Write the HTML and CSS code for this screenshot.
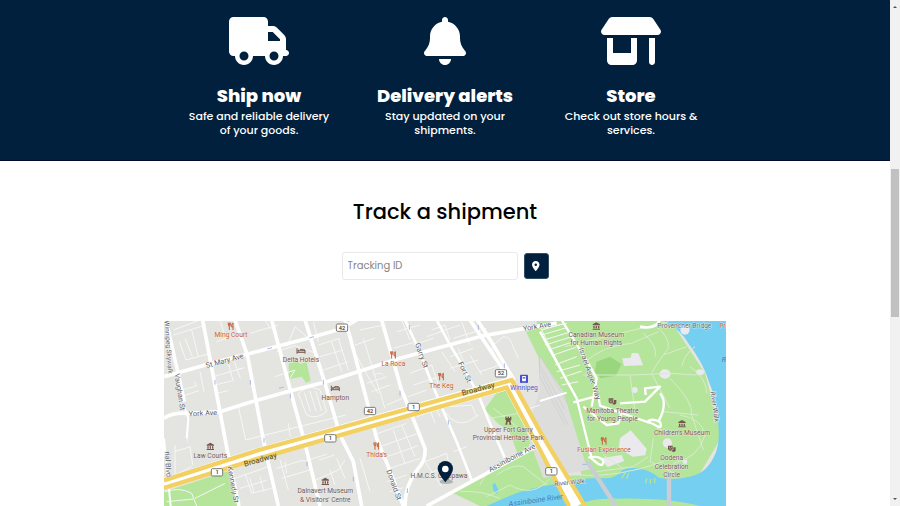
FILE: index.html
```html
<!DOCTYPE html>
<html lang="en">
<head>
<meta charset="utf-8">
<title>Track a shipment</title>
<link rel="stylesheet" href="styles.css">
</head>
<body>
<div class="page">
<main class="content">
  <section class="services">
    <article class="service">
      <svg class="service-icon" viewBox="0 0 640 512" aria-hidden="true"><path d="M48 0C21.5 0 0 21.5 0 48V368c0 26.5 21.5 48 48 48H64c0 53 43 96 96 96s96-43 96-96H384c0 53 43 96 96 96s96-43 96-96h32c17.7 0 32-14.3 32-32s-14.3-32-32-32V288 256 237.3c0-17-6.7-33.3-18.7-45.3L512 114.7c-12-12-28.3-18.7-45.3-18.7H416V48c0-26.5-21.5-48-48-48H48zM416 160h50.7L544 237.3V256H416V160zM112 416a48 48 0 1 1 96 0 48 48 0 1 1 -96 0zm368-48a48 48 0 1 1 0 96 48 48 0 1 1 0-96z"/></svg>
      <h2 class="service-title">Ship now</h2>
      <p class="service-text">Safe and reliable delivery of your goods.</p>
    </article>
    <article class="service">
      <svg class="service-icon" viewBox="0 0 448 512" aria-hidden="true"><path d="M224 0c-17.7 0-32 14.3-32 32V51.2C119 66 64 130.6 64 208v18.8c0 47-17.3 92.4-48.5 127.6l-7.4 8.3c-8.4 9.4-10.4 22.9-5.3 34.4S19.4 416 32 416H416c12.6 0 24-7.4 29.2-18.9s3.1-25-5.3-34.4l-7.4-8.3C401.3 319.2 384 273.9 384 226.8V208c0-77.4-55-142-128-156.8V32c0-17.7-14.3-32-32-32zm45.3 493.3c12-12 18.7-28.3 18.7-45.3H224 160c0 17 6.7 33.3 18.7 45.3s28.3 18.7 45.3 18.7s33.3-6.7 45.3-18.7z"/></svg>
      <h2 class="service-title">Delivery alerts</h2>
      <p class="service-text">Stay updated on your shipments.</p>
    </article>
    <article class="service">
      <svg class="service-icon" viewBox="0 0 640 512" aria-hidden="true"><path d="M36.8 192H603.2c20.3 0 36.8-16.5 36.8-36.8c0-7.3-2.2-14.4-6.2-20.4L558.2 21.4C549.3 8 534.4 0 518.3 0H121.7c-16 0-31 8-39.9 21.4L6.2 134.7c-4 6.1-6.2 13.2-6.2 20.4C0 175.5 16.5 192 36.8 192zM64 224V384v80c0 26.5 21.5 48 48 48H336c26.5 0 48-21.5 48-48V384 224H320V384H128V224H64zm448 0V480c0 17.7 14.3 32 32 32s32-14.3 32-32V224H512z"/></svg>
      <h2 class="service-title">Store</h2>
      <p class="service-text">Check out store hours &amp; services.</p>
    </article>
  </section>

  <section class="track">
    <h1 class="track-title">Track a shipment</h1>
    <form class="track-form">
      <input class="track-input" type="text" placeholder="Tracking ID" aria-label="Tracking ID">
      <button class="track-button" type="button" aria-label="Locate shipment">
        <svg class="track-pin" viewBox="0 0 384 512" aria-hidden="true"><path d="M215.7 499.2C267 435 384 279.4 384 192C384 86 298 0 192 0S0 86 0 192c0 87.4 117 243 168.3 307.2c12.3 15.3 35.1 15.3 47.4 0zM192 128a64 64 0 1 1 0 128 64 64 0 1 1 0-128z"/></svg>
      </button>
    </form>
    <svg class="map" viewBox="12 18 1686 555" preserveAspectRatio="xMidYMin slice" role="img" aria-label="Map of downtown Winnipeg">
      <defs>
        <g id="fork"><path d="M-8-11v7q0 3 3 3v12M-5-11v9M-2-11v7q0 3-3 3M6 11V-10q-4 1-4 7v5h4" fill="none" stroke="currentColor" stroke-width="3"/></g>
        <g id="bed"><path d="M-12-8v16M-12 4h24v4M12 4v-5H-2v-4h10q4 0 4 5" fill="none" stroke="currentColor" stroke-width="3"/><circle cx="-7" cy="-1" r="3" fill="currentColor"/></g>
        <g id="museum"><path d="M-11-5L0-11 11-5v3h-22zM-9 0h4v7h-4zM-2 0h4v7h-4zM5 0h4v7H5zM-11 8h22v3h-22z" fill="currentColor"/></g>
        <g id="masks"><path d="M-11-9H3V2q-7 9-14 0zM5-4h7V6q-5 8-12 1l5-5z" fill="currentColor"/><path d="M-8-4h3M-2-4h3M-7 2q3-3 6 0" fill="none" stroke="#b5e59b" stroke-width="2"/></g>
        <g id="castle"><path d="M-9-12h4v4h3v-4h4v4h3v-4h4v9l-3 3 3 12H3V6q-3-5-6 0v6h-6l3-12-3-3z" fill="currentColor"/></g>
        <g id="shield"><rect x="-17" y="-11" width="34" height="22" rx="4"/></g>
      </defs>
      <rect x="12" y="18" width="1686" height="555" fill="#e4e4e1"/>

      <g fill="#b5e59b">
        <path d="M12 530L205 468l30 105H12z"/>
        <path d="M386 146l28-8 6 8 20-4 12 56-14 5-13-18-38 8z"/>
        <path d="M974 283l42-58 28-4 72 154-12 22-32 18-25-70-32-18z"/>
        <path d="M870 530L1132 390l35 80 40 103H960z"/>
        <path d="M1098 50l42-14v100z"/>
        <path d="M1130 15h400l105 160 50 190-80 135-120 20-200-10-165 10-20-30 165-10-15-60-30-85-80-125z"/>
      </g>
      <path d="M1310 140l40-15 35 22-18 35-45 8-18-20z" fill="#9ad67e"/>

      <path d="M1505 15q60 30 80 70 45 60 62 115 22 50 28 130 5 50-8 85-25 58-70 68-50 15-100 5-25-23-60-27-30-5-50 5-20 25-50 24-55-3-100 8l-97 17q-55 10-115 38l-45 20h740V15z" fill="#74cff0"/>
      <path d="M1250 573q40-25 130-22 150-2 240 22z" fill="#b5e59b"/>
      <path d="M1385 490l12-18M1400 492l6-18M1460 490l-3 15M1472 492l-2 14M1484 490v14" stroke="#b5e59b" stroke-width="4"/>
      <path d="M997 508l8-4 12 24-8 9-8-9z" fill="#74cff0"/>

      <path d="M1140 126l70 105 65 210 25 20-150 28-50-135 40-130z" fill="#dddedb"/>
      <g fill="none" stroke="#cbcbd0" stroke-width="2"><path d="M1140 150l75 135M1140 165l85 165M1140 185l75 145M1140 120l85 150"/></g>
      <g fill="#e9e9ee">
        <path d="M1387 130l25-2 3-14 20 1 6 14 8 22-57 2z"/>
        <ellipse cx="1515" cy="177" rx="17" ry="14"/><ellipse cx="1620" cy="172" rx="12" ry="9"/><circle cx="1424" cy="225" r="9"/><circle cx="1575" cy="45" r="14"/><circle cx="1575" cy="440" r="7"/><circle cx="1522" cy="384" r="14"/>
        <path d="M1380 370l32-24 48 55-4 20-38 4-42-25zM1320 430l65-10 8 18-50 18z"/>
      </g>

      <g fill="none" stroke="#f7f7f5" stroke-width="3" stroke-linejoin="round">
        <path d="M40 60L138 30M40 45l80-30M58 80l20 55 75-20M75 70l22 55M95 45l20 80M170 80l70-25M180 15l18 60M160 185l85-25M205 145l15 55M223 140l18 50M228 165l26-7M165 210l50-12M170 235l35-8M270 55l85-25M315 15l18 28M350 110l55-18 55 20M380 95l25-60 35 30M460 20l15 60M475 90l65-20M480 125l70-20M490 165l75-25M515 80l30 90M535 70l30 95"/>
        <path d="M65 225l45-12-8-15M62 245l55-18M120 170l12 60M235 275l22 100 300-75M85 315l-3 65M45 390v90l50-25M42 410l50-15M90 395l8 55M345 185l60-20-15 25M415 235l25 65q30 15 60-10l-20-65q-30-15-50 0zM433 233l18 55M450 228l18 60M467 228l18 60M500 235l22 60M385 325l6 40"/>
        <path d="M225 490l100-35M240 520l80-24M255 475l20 60 60-15M270 490l12 45M300 485l12 45M350 460l80-25M360 435l25 90M365 490l85-25M375 440l5 35M430 440l70-22M455 500l80-35 20-30M478 435l45-15M510 465l15 45M530 430l25 60"/>
        <path d="M585 90l60-20M600 45l70-15M610 70l65 210M585 115l45 80 25 40M620 205l60-20M635 230l55-20M640 180q20-10 30 0M680 270l60-25M700 100l70-20M710 50l70-20M725 15l25 60M760 90l60-20M770 120l60-22M750 175l65-25 20 60M760 210l70-22M745 245l55-20M800 65l100-35M815 45l40-15 15 45M845 110l40 60M870 125l70-25M870 160l85-25M880 70l100-30M905 20l25 70M930 120l35 60M960 170l55-18M1010 140l-15-45 35-30q20 0 25 20l20 45M895 100l20 50"/>
        <path d="M640 360l100-35M660 395l115-40M665 430l110-38M690 460l90-30M700 345l35 100M725 330l40 95M680 500l60-20M690 530l40-12M600 430l30 100M760 280l60-20 20 45M770 305l75-25M800 255l25 70M855 290q30 45 70 30l30-20M870 275l65-5 15 35M795 440l65-25 10 50M795 440l50 75M810 475l45-20M880 410l40-15M1095 285l45-15"/>
        <path d="M15 530q45-15 80 5l15 38M105 550l90-45M20 560l80-8M1145 45l70-20M1145 60l75-22M1150 75l75-22M1155 90l78-24M1165 105l75-25M1175 122l72-25M1185 150l65-25M1190 170l70-20M1200 190l65-22M1205 210l50-10M1140 35l85 170M1220 25l-70 15"/>
      </g>
      <g fill="none" stroke="#d8eccd" stroke-width="3">
        <path d="M1215 95l310-75M1270 145q60-55 145-60l80-35M1270 180h100l50 0 110-5 80 5M1480 25q50 40 45 75-35 45-50 75l55 105M1510 120l70-25M1450 55q45 40 35 70M1565 155q10-40 40-60M1590 155q50 35 50 80M1530 190q70 70 65 110l35 105M1410 180l15 110M1560 300q65 10 75 60-20 70-95 85M1480 370l-10 70 75 35M1510 290l105 10M1310 470l110-15 45-30M1330 420l60 40M1250 480q120 10 260-40M1490 340l55 15M990 310l85-15M1000 280l90 70M1010 480q50-35 80-25l70 55M900 530q60-5 120 20M960 510q20-50 60-50M1050 510q70 40 120-20M980 545l70-35"/>
      </g>
      <g fill="none" stroke="#cccdd4" stroke-width="13"><path d="M1282 440l85 133M1527 490v83"/></g>

      <g fill="none" stroke="#fff" stroke-width="11" stroke-linejoin="round">
        <path d="M18 15l35 155 20 90M128 15l84 445 25 113M225 15l37 105 55 290 38 163M335 15l60 225 40 145 45 188M435 15l60 190 45 155 40 80 25 133M555 15l15 50 80 305 35 85 45 118M665 15l58 205 72 180q3 35-20 60-40 50-40 113"/>
        <path d="M735 15l35 75 50 125 35 85 35 80 45 115M830 15l40 75 40 65 45 85 45 110 35 80" stroke-width="8"/>
        <path d="M930 15l50 75 74 110M952 15l45 70 65 110"/>
        <path d="M12 185l148-42 100-25 190-50 90-25 50-28M12 310q25-18 70-15l98-5 90-28 120-34 110-28 220-70 250-68 220-38M800 573l340-185"/>
        <path d="M1205 15l80 130 25 45-15 85M1140 50l110 200 45 180q35 35 35 8-10-18-45-10M1240 262l75-20 5 30 160 55q30 20 20-6-30-15-40 3M1380 265l75-5 45-45-45 5 2 20M1500 235q25 30-5 85M1270 275l70 55 35-5 10-35" stroke-width="7"/>
        <path d="M1140 258l80-25M12 370l20 203M75 280l10 30-5 60" stroke-width="6"/>
        <path d="M1500 15q-15 30-60 20" stroke-width="8"/>
      </g>
      <g fill="none" stroke-linejoin="miter">
        <path d="M12 507l285-91 273-76 476-134 94 178 112 189" stroke="#fff" stroke-width="36"/>
        <path d="M12 496l285-91 273-75 485-135 90 163 130 215M12 519l285-89 273-78 470-134 100 187 87 168" stroke="#f2d061" stroke-width="13"/>
      </g>
      <g fill="none" stroke="#a9b8e5" stroke-width="3">
        <path d="M165 195v14M271 195v14M391 236v14M490 195v14M312 369v14M441 440v14M322 102l14-4M448 69l14-4M357 220l14-4M720 228v14M865 315v14M742 520v14M955 30v14M1033 145v14M748 30v14M1267 448h14M580 485v14"/>
      </g>

      <g class="shields">
        <use href="#shield" x="546" y="38"/><use href="#shield" x="511" y="370"/><use href="#shield" x="171" y="472"/><use href="#shield" x="630" y="288"/><use href="#shield" x="761" y="276"/><use href="#shield" x="1023" y="175"/><use href="#shield" x="1174" y="469"/>
      </g>
      <g class="shield-text">
        <text x="546" y="44">42</text><text x="511" y="376">1</text><text x="171" y="478">1</text><text x="630" y="294">42</text><text x="761" y="282">1</text><text x="1023" y="181">52</text><text x="1174" y="475">1</text>
      </g>

      <g class="streets">
        <text transform="translate(196 144) rotate(-15)">St Mary Ave</text>
        <text transform="translate(129 302) rotate(-3)">York Ave</text>
        <text transform="translate(52 232) rotate(81)">Vaughan St</text>
        <text class="street-small" transform="translate(19 97) rotate(86)">Winnipeg Skywalk</text>
        <text transform="translate(212 510) rotate(80)">Kennedy St</text>
        <text transform="translate(17 448) rotate(87)">rial Blvd</text>
        <text class="street-large" transform="translate(303 441) rotate(-16)">Broadway</text>
        <text class="street-large" transform="translate(956 229) rotate(-15)">Broadway</text>
        <text transform="translate(778 124) rotate(70)">Garry St</text>
        <text transform="translate(908 174) rotate(65)">Fort St</text>
        <text transform="translate(695 512) rotate(70)">Donald St</text>
        <text transform="translate(1132 41) rotate(-10)">York Ave</text>
        <text transform="translate(1059 435) rotate(-28)">Assiniboine Ave</text>
        <text transform="translate(1283 178) rotate(71)">Israel Asper Way</text>
        <text class="street-small" transform="translate(1229 509) rotate(-6)">River Walk</text>
        <text class="street-small" transform="translate(1658 276) rotate(82)">River Walk</text>
        <text class="street-small" x="1573" y="40">Provencher Bridge</text>
        <text class="river" transform="translate(1128 563) rotate(-8)">Assiniboine River</text>
        <text class="river" x="1692" y="142">R</text>
      </g>

      <g class="places">
        <use href="#bed" x="423" y="108"/><text x="423" y="141">Delta Hotels</text>
        <use href="#bed" x="526" y="220"/><text x="526" y="254">Hampton</text>
        <use href="#museum" x="151" y="394"/><text x="151" y="430">Law Courts</text>
        <use href="#museum" x="496" y="499"/><text x="496" y="535">Dalnavert Museum</text><text x="496" y="561">&amp; Visitors' Centre</text>
        <use href="#castle" x="1045" y="317"/><text x="1045" y="351">Upper Fort Garry</text><text x="1045" y="376">Provincial Heritage Park</text>
        <text x="837" y="490">H.M.C.S. Chippawa</text>
        <use href="#museum" x="1309" y="33"/><text x="1309" y="67">Canadian Museum</text><text x="1309" y="91">for Human Rights</text>
        <use href="#masks" x="1357" y="259"/><text x="1357" y="293">Manitoba Theatre</text><text x="1357" y="317">for Young People</text>
        <use href="#museum" x="1566" y="326"/><text x="1566" y="361">Children's Museum</text>
        <use href="#masks" x="1535" y="401"/><text x="1535" y="436">Oodena</text><text x="1535" y="461">Celebration</text><text x="1535" y="486">Circle</text>
      </g>
      <g class="places food">
        <use href="#fork" x="213" y="34"/><text x="213" y="66">Ming Court</text>
        <use href="#fork" x="700" y="120"/><text x="700" y="154">La Roca</text>
        <use href="#fork" x="844" y="185"/><text x="844" y="218">The Keg</text>
        <use href="#fork" x="650" y="393"/><text x="650" y="427">Thida's</text>
        <use href="#fork" x="1332" y="378"/><text x="1332" y="412">Fusian Experience</text>
        <text x="1688" y="40">Pr</text>
      </g>
      <g class="places station">
        <rect x="1080" y="179" width="24" height="25" rx="3" fill="currentColor"/><rect x="1086" y="183" width="12" height="15" rx="2" fill="#fff"/><path d="M1088 186h8v5h-8zM1086 201h12" fill="currentColor" stroke="#fff" stroke-width="1"/>
        <text x="1092" y="226">Winnipeg</text>
      </g>
      <ellipse cx="859" cy="500" rx="20" ry="7" fill="#38444c" opacity=".3"/>
      <path d="M856 502q-23-28-23-41a23 23 0 0 1 46 0q0 13-23 41z" fill="#00203d"/>
      <circle cx="856" cy="462" r="10" fill="#fff"/>
    </svg>
  </section>
</main>
<div class="scrollbar" aria-hidden="true">
  <span class="arrow arrow-up"></span>
  <span class="thumb"></span>
  <span class="arrow arrow-down"></span>
</div>
</div>
</body>
</html>
```
FILE: styles.css
```css
* {
  box-sizing: border-box;
}

body {
  margin: 0;
  background: #fff;
  color: #000;
  font-family: Poppins, Inter, sans-serif;
}

h1,
h2,
p {
  margin: 0;
}

.page {
  display: flex;
  height: 100vh;
  overflow: hidden;
}

.content {
  flex: 1;
  min-width: 0;
}

.services {
  display: flex;
  justify-content: center;
  gap: 42px;
  padding: 17px 16px 23px;
  background: #00203d;
  border-bottom: 1px solid #000c2e;
  color: #fff;
  text-align: center;
}

.service {
  display: flex;
  flex-direction: column;
  align-items: center;
  width: 144px;
}

.service-icon {
  height: 48px;
  fill: #fff;
}

.service-title {
  margin-top: 19px;
  font-size: 18px;
  font-weight: 800;
  line-height: 24px;
  white-space: nowrap;
}

.service-text {
  margin-top: 1px;
  font-size: 11px;
  font-weight: 500;
  line-height: 14px;
}

.track {
  display: flex;
  flex-direction: column;
  align-items: center;
  padding-top: 34px;
}

.track-title {
  font-size: 21px;
  font-weight: 500;
  line-height: 34px;
}

.track-form {
  display: flex;
  align-items: center;
  gap: 6px;
  margin: 23px 0 41px;
}

.track-input {
  width: 176px;
  height: 28px;
  padding: 0 5px;
  border: 1px solid #e9e9e9;
  border-radius: 3px;
  background: #fff;
  font-family: Poppins, Inter, sans-serif;
  font-size: 10px;
}

.track-input::placeholder {
  color: #858585;
  opacity: 1;
}

.track-button {
  display: flex;
  align-items: center;
  justify-content: center;
  width: 25px;
  height: 26px;
  padding: 0;
  border: 1px solid #334d64;
  border-radius: 3px;
  background: #00203d;
}

.track-pin {
  height: 10px;
  fill: #fff;
}

.map {
  display: block;
  width: 100%;
  max-width: 562px;
  font-family: Roboto, sans-serif;
}

.shields {
  fill: #fff;
  stroke: #777;
  stroke-width: 3px;
}

.shield-text {
  fill: #333;
  font-size: 17px;
  font-weight: 500;
  text-anchor: middle;
}

.streets {
  fill: #5d5d61;
  stroke: #fff;
  stroke-width: 2px;
  paint-order: stroke;
  font-size: 22px;
  text-anchor: middle;
}

.street-small {
  font-size: 20px;
}

.street-large {
  fill: #51493a;
  stroke: #f2d061;
  stroke-width: 1px;
  font-size: 23px;
}

.river {
  fill: #4480b5;
  stroke: none;
  font-size: 22px;
  font-style: italic;
}

.places {
  color: #76574d;
  fill: currentColor;
  font-size: 20px;
  text-anchor: middle;
}

.places text {
  stroke: #f0f0ec;
  stroke-width: 2px;
  paint-order: stroke;
}

.food {
  color: #ca5c34;
}

.station {
  color: #4550cf;
}

.scrollbar {
  display: flex;
  flex-direction: column;
  align-items: center;
  flex: 0 0 10px;
  padding: 4px 0;
  background: #f1f1f1;
}

.thumb {
  width: 8px;
  flex: 148;
  background: #c1c1c1;
}

.arrow {
  display: flex;
  justify-content: center;
}

.arrow::before {
  content: "";
  border: 2px solid transparent;
}

.arrow-up {
  flex: 165;
}

.arrow-up::before {
  height: 2px;
  border-top: 0;
  border-bottom-color: #505050;
}

.arrow-down {
  flex: 185;
  align-items: flex-end;
}

.arrow-down::before {
  height: 2px;
  border-bottom: 0;
  border-top-color: #505050;
}
```
